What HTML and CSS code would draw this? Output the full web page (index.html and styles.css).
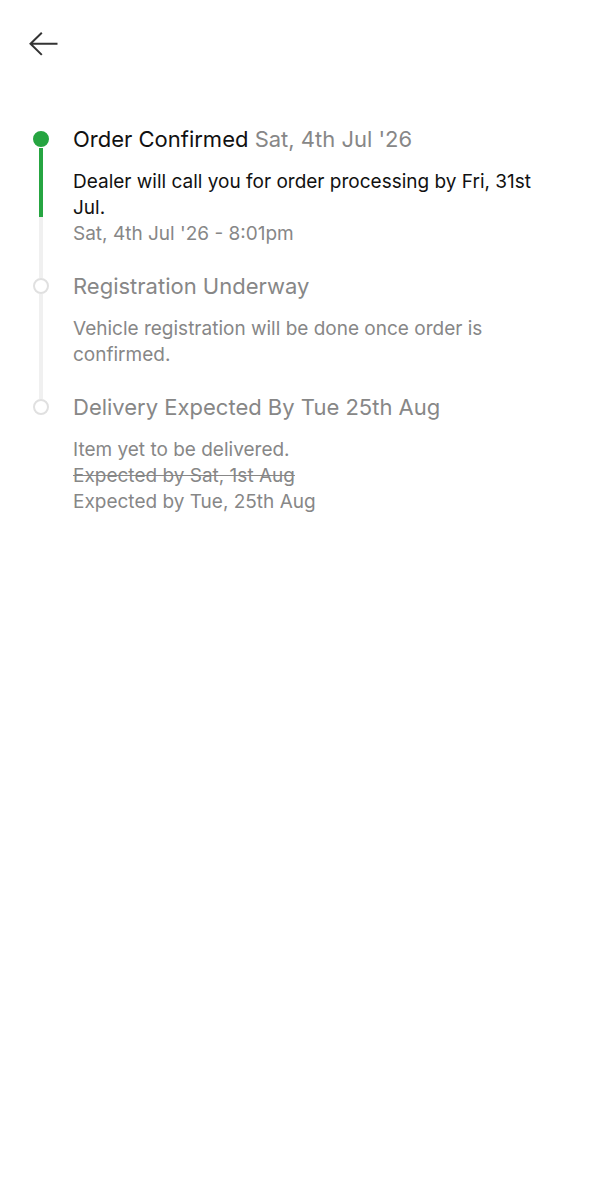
FILE: index.html
```html
<!DOCTYPE html>
<html lang="en">
<head>
    <meta charset="UTF-8">
    <meta name="viewport" content="width=device-width, initial-scale=1.0">
    <title>Order Status</title>
    <link rel="stylesheet" href="styles.css">
</head>
<body>

    <header>
        <button type="button" class="back" aria-label="Back">
            <svg width="30" height="26" viewBox="0 0 30 26" fill="none" stroke="#333" stroke-width="2">
                <path d="M28.5 12.7H1.5M12.8 1.7L1.5 12.7l11.3 11.2"/>
            </svg>
        </button>
    </header>

    <main>
        <ol class="timeline">
            <li class="step done">
                <div class="track"><span class="dot"></span><span class="line"></span></div>
                <div class="details">
                    <h2>Order Confirmed <span class="date">Sat, 4th Jul '26</span></h2>
                    <p class="message">Dealer will call you for order processing by Fri, 31st Jul.</p>
                    <p>Sat, 4th Jul '26 - 8:01pm</p>
                </div>
            </li>
            <li class="step">
                <div class="track"><span class="dot"></span><span class="line"></span></div>
                <div class="details">
                    <h2>Registration Underway</h2>
                    <p>Vehicle registration will be done once order is confirmed.</p>
                </div>
            </li>
            <li class="step">
                <div class="track"><span class="dot"></span></div>
                <div class="details">
                    <h2>Delivery Expected By Tue 25th Aug</h2>
                    <p>Item yet to be delivered.</p>
                    <p><del>Expected by Sat, 1st Aug</del></p>
                    <p>Expected by Tue, 25th Aug</p>
                </div>
            </li>
        </ol>
    </main>

</body>
</html>
```

FILE: styles.css
```css
/* Root Variables */
:root {
    --green: #26a541;
    --dark: #111;
    --gray: #878787;
    --line: #f0f0f0;
    --ring: #e0e0e0;
}

/* General Styles */
body {
    background: #fff;
    color: var(--gray);
    font-family: Inter, "Liberation Sans", sans-serif;
    margin: 0;
}

h2, p {
    font-weight: 400;
    margin: 0;
}

/* Header */
header {
    display: flex;
    padding: 31px 29px;
}

.back {
    background: none;
    border: none;
    padding: 0;
    cursor: pointer;
}

.back svg {
    display: block;
}

/* Timeline */
.timeline {
    list-style: none;
    margin: 0;
    padding: 37px 60px 0 32px;
}

.step {
    display: flex;
    gap: 24px;
}

.track {
    display: flex;
    flex-direction: column;
    align-items: center;
    flex: none;
    width: 17px;
    padding-top: 6px;
}

.dot {
    box-sizing: border-box;
    width: 16px;
    height: 16px;
    border: 2px solid var(--ring);
    border-radius: 50%;
}

.line {
    flex: 1;
    width: 4px;
    margin-bottom: -6px;
    background: var(--line);
}

.done .dot {
    background: var(--green);
    border-color: var(--green);
}

.done .line {
    margin-top: 1px;
    background: linear-gradient(var(--green) 69px, var(--line) 69px);
}

.details {
    padding-bottom: 25px;
}

h2 {
    font-size: 22px;
    line-height: 28px;
    margin-bottom: 16px;
}

p {
    font-size: 19px;
    line-height: 26px;
}

.done h2,
.message {
    color: var(--dark);
}

.done .date {
    color: var(--gray);
}
```
